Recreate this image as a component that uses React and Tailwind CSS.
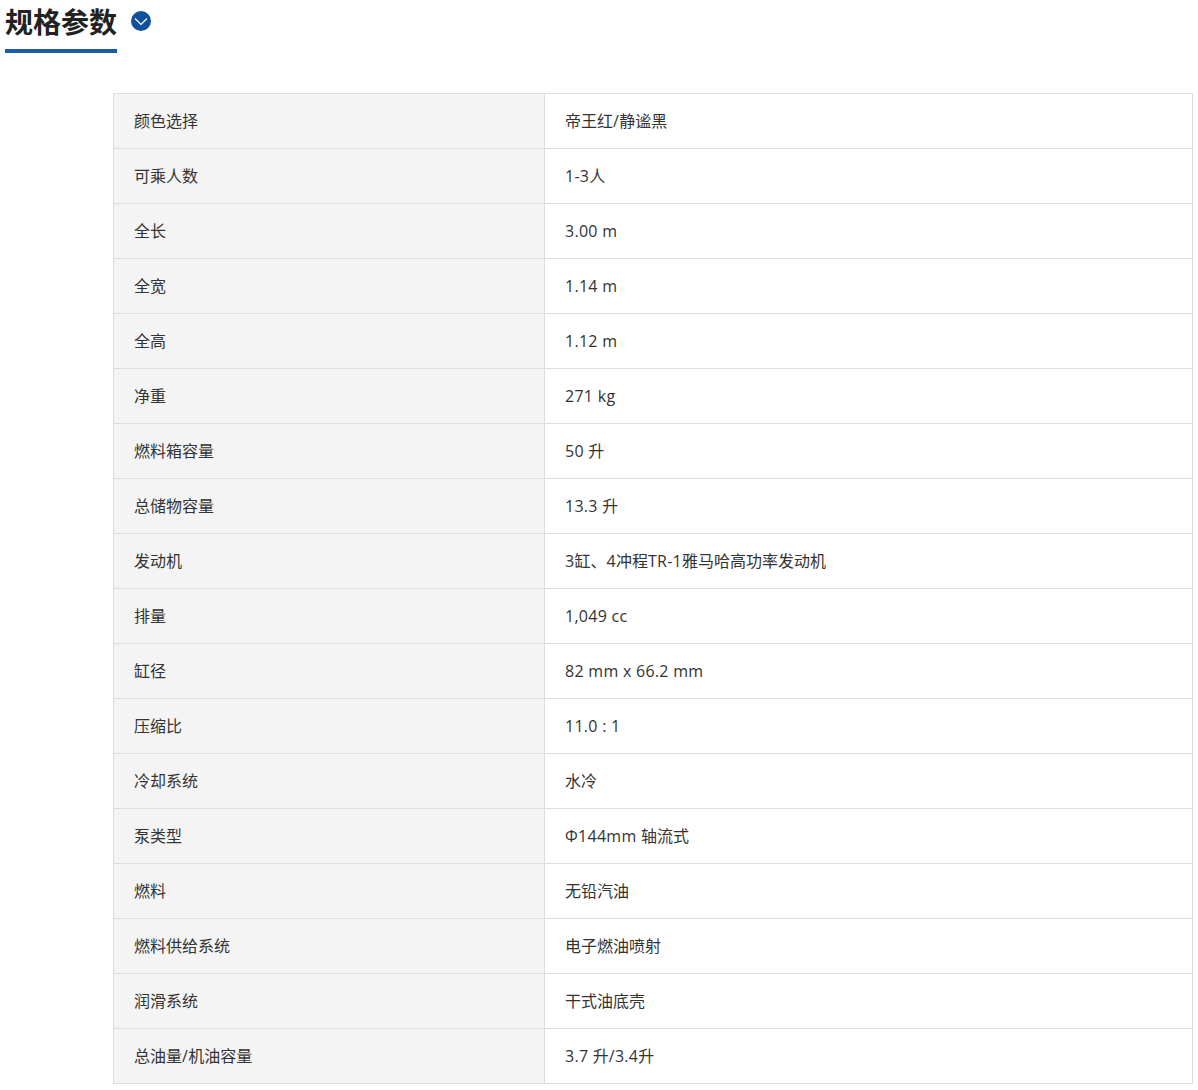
import React from 'react';

const SPECS = [
  ['颜色选择', '帝王红/静谧黑'],
  ['可乘人数', '1-3人'],
  ['全长', '3.00 m'],
  ['全宽', '1.14 m'],
  ['全高', '1.12 m'],
  ['净重', '271 kg'],
  ['燃料箱容量', '50 升'],
  ['总储物容量', '13.3 升'],
  ['发动机', '3缸、4冲程TR-1雅马哈高功率发动机'],
  ['排量', '1,049 cc'],
  ['缸径', '82 mm x 66.2 mm'],
  ['压缩比', '11.0 : 1'],
  ['冷却系统', '水冷'],
  ['泵类型', 'Φ144mm 轴流式'],
  ['燃料', '无铅汽油'],
  ['燃料供给系统', '电子燃油喷射'],
  ['润滑系统', '干式油底壳'],
  ['总油量/机油容量', '3.7 升/3.4升'],
];

// latin runs are a touch wider in the original font
function SpecText({ text }) {
  return text.split(/([\x20-\x7eΦ]+)/).map((part, i) =>
    i % 2 ? <span key={i} className="tracking-[0.28px]">{part}</span> : part
  );
}

export default function App() {
  return (
    <div className="w-[1198px] h-[1090px] overflow-hidden bg-white text-[#333] font-['Open_Sans','Noto_Sans_CJK_SC',sans-serif]">
      <div className="flex items-start pl-[5px]">
        <h2 className="h-[53px] border-b-4 border-[#1a5ba6] text-[28px] leading-[45px] font-bold text-[#222]">规格参数</h2>
        <svg className="ml-[14px] mt-[11px]" width="20" height="20" viewBox="0 0 20 20">
          <circle cx="10" cy="10" r="10" fill="#10519e" />
          <path d="M4 7.5 L10 13.5 L16 7.5" fill="none" stroke="#fff" strokeWidth="1.2" />
        </svg>
      </div>
      <div className="ml-[113px] mt-10 w-[1080px] border-t border-l border-r border-[#ddd]">
        {SPECS.map(([name, value]) => (
          <div key={name} className="grid grid-cols-[431px_1fr] h-[55px] border-b border-[#ddd]">
            <div className="flex items-center pl-[20px] bg-[#f4f4f4] border-r border-[#ddd] text-base"><span><SpecText text={name} /></span></div>
            <div className="flex items-center pl-[20px] text-base"><span><SpecText text={value} /></span></div>
          </div>
        ))}
      </div>
    </div>
  );
}
